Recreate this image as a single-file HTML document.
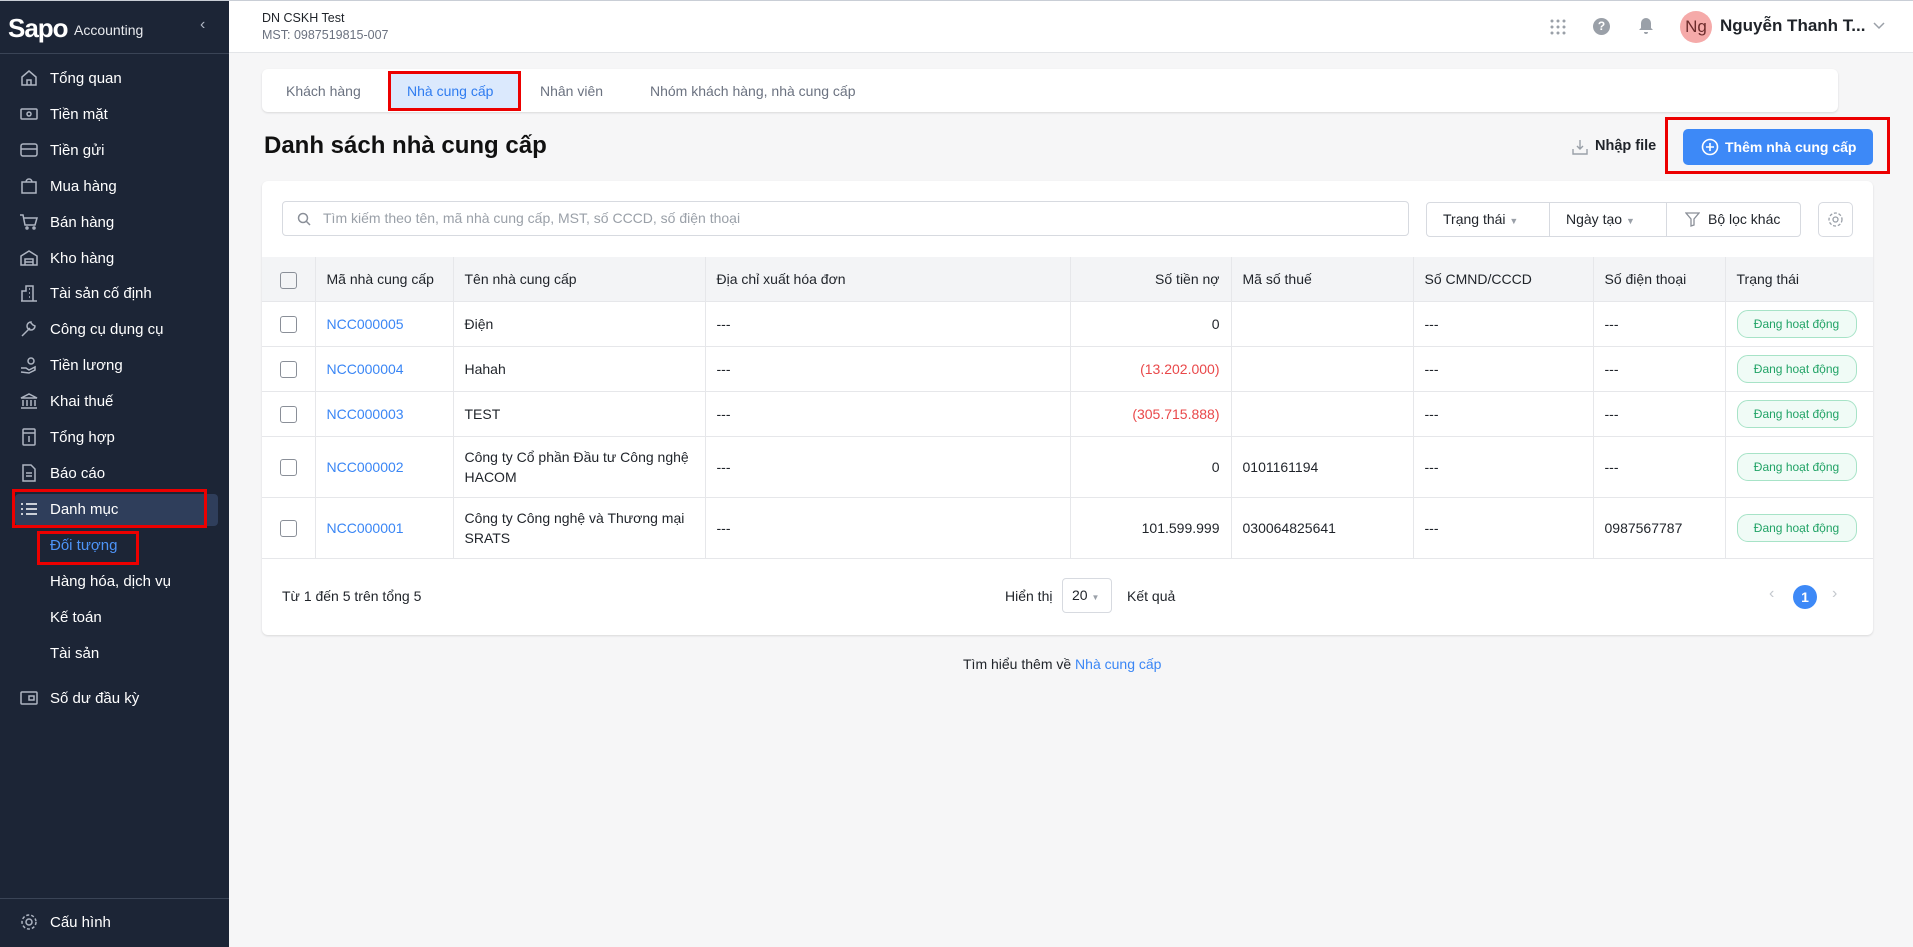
<!DOCTYPE html>
<html><head><meta charset="utf-8"><style>
*{box-sizing:border-box;margin:0;padding:0}
body{width:1913px;height:947px;overflow:hidden;font-family:"Liberation Sans",Arial,sans-serif;background:#f6f6f7;position:relative;color:#1f2329}
.abs{position:absolute}
#sb{left:0;top:0;width:229px;height:947px;background:#1c2536;color:#fff}
.mi{position:absolute;left:0;width:229px;height:36px;display:flex;align-items:center;font-size:15px;color:#fff}
.mi svg{position:absolute;left:19px;width:20px;height:20px;fill:none;stroke:#aeb5c2;stroke-width:1.5}
.mi span{position:absolute;left:50px}
.sub{position:absolute;left:50px;font-size:15px;color:#fff}
#hd{left:229px;top:0;width:1684px;height:53px;background:#fff;border-bottom:1px solid #e3e5e8}
.card{background:#fff;border-radius:6px;box-shadow:0 1px 2px rgba(0,0,0,.12)}
table{border-collapse:collapse;table-layout:fixed;font-size:14px}
td,th{border-right:1px solid #e6e7ea;border-bottom:1px solid #e6e7ea;padding:0 11px;text-align:left;font-weight:normal;vertical-align:middle;line-height:20px}
th{background:#f3f4f6;height:44px;color:#1f2329}
td:last-child,th:last-child{border-right:none}
.cb{width:17px;height:17px;border:1.6px solid #8a8f98;border-radius:3px;display:inline-block;vertical-align:middle}
.lk{color:#3a86f5}
.red{color:#e9484a}
.r{text-align:right}
.bd{display:inline-block;border:1px solid #a7e3c7;background:#f0fbf6;color:#21a366;border-radius:11px;font-size:12px;padding:3px 0;width:120px;text-align:center}
.redbox{position:absolute;border:3px solid #ec0000}
</style></head><body>
<div class="abs" style="left:0;top:0;width:1913px;height:1px;background:#c9ced6;z-index:5"></div>
<div id="sb" class="abs">
 <div class="abs" style="left:0;top:53px;width:229px;height:1px;background:#3a4456"></div>
 <div class="abs" style="left:8px;top:13px;font-size:26px;font-weight:bold;letter-spacing:-1px;color:#fff">Sapo</div>
 <div class="abs" style="left:74px;top:22px;font-size:14px;color:#e8eaee">Accounting</div>
 <div class="abs" style="left:200px;top:16px;font-size:16px;color:#aeb5c2">‹</div>
 <div class="mi" style="top:60px"><svg viewBox="0 0 20 20"><path d="M3 9l7-6 7 6v8H3z M8 17v-5h4v5"/></svg><span>Tổng quan</span></div>
 <div class="mi" style="top:96px"><svg viewBox="0 0 20 20"><rect x="2" y="5" width="16" height="10" rx="1"/><circle cx="10" cy="10" r="2"/></svg><span>Tiền mặt</span></div>
 <div class="mi" style="top:132px"><svg viewBox="0 0 20 20"><rect x="2" y="4" width="16" height="12" rx="2"/><path d="M2 9h16"/></svg><span>Tiền gửi</span></div>
 <div class="mi" style="top:168px"><svg viewBox="0 0 20 20"><path d="M3 6h14v11H3z M7 6a3 3 0 016 0"/></svg><span>Mua hàng</span></div>
 <div class="mi" style="top:204px"><svg viewBox="0 0 20 20"><path d="M1 3h3l2 10h10l2-7H5"/><circle cx="8" cy="16" r="1"/><circle cx="15" cy="16" r="1"/></svg><span>Bán hàng</span></div>
 <div class="mi" style="top:240px"><svg viewBox="0 0 20 20"><path d="M2 8l8-5 8 5v9H2z M6 17v-6h8v6 M6 14h8"/></svg><span>Kho hàng</span></div>
 <div class="mi" style="top:275px"><svg viewBox="0 0 20 20"><path d="M3 18V8h4V3h7v15 M2 18h16 M10 6h1 M10 10h1 M10 14h1"/></svg><span>Tài sản cố định</span></div>
 <div class="mi" style="top:311px"><svg viewBox="0 0 20 20"><path d="M3 17l8-8 M12 3a4 4 0 104 4l-2-1-2-2z"/></svg><span>Công cụ dụng cụ</span></div>
 <div class="mi" style="top:347px"><svg viewBox="0 0 20 20"><circle cx="12" cy="6" r="3"/><path d="M2 13h5l3 2 6-3v3l-6 3-8-1"/></svg><span>Tiền lương</span></div>
 <div class="mi" style="top:383px"><svg viewBox="0 0 20 20"><path d="M2 7l8-4 8 4z M4 9v6 M8 9v6 M12 9v6 M16 9v6 M2 17h16"/></svg><span>Khai thuế</span></div>
 <div class="mi" style="top:419px"><svg viewBox="0 0 20 20"><rect x="4" y="2" width="12" height="16" rx="1"/><path d="M4 6h12 M10 9v6"/></svg><span>Tổng hợp</span></div>
 <div class="mi" style="top:455px"><svg viewBox="0 0 20 20"><path d="M4 2h8l4 4v12H4z M7 10h6 M7 13h6"/></svg><span>Báo cáo</span></div>
 <div class="abs" style="left:15px;top:494px;width:203px;height:32px;background:#2f3e5b;border-radius:4px"></div>
 <div class="mi" style="top:491px"><svg viewBox="0 0 20 20" style="stroke:#fff"><path d="M7 5h11 M7 10h11 M7 15h11 M2 5h2 M2 10h2 M2 15h2"/></svg><span>Danh mục</span></div>
 <div class="redbox" style="left:12px;top:489px;width:195px;height:39px"></div>
 <div class="sub" style="top:537px;color:#4d94f8">Đối tượng</div>
 <div class="redbox" style="left:37px;top:531px;width:102px;height:34px"></div>
 <div class="sub" style="top:573px">Hàng hóa, dịch vụ</div>
 <div class="sub" style="top:609px">Kế toán</div>
 <div class="sub" style="top:645px">Tài sản</div>
 <div class="mi" style="top:680px"><svg viewBox="0 0 20 20"><rect x="2" y="4" width="16" height="12" rx="1"/><rect x="10" y="8" width="5" height="4"/></svg><span>Số dư đầu kỳ</span></div>
 <div class="abs" style="left:0;top:898px;width:229px;height:1px;background:#3a4456"></div>
 <div class="mi" style="top:904px"><svg viewBox="0 0 20 20"><circle cx="10" cy="10" r="3"/><circle cx="10" cy="10" r="7" stroke-dasharray="3 2"/></svg><span>Cấu hình</span></div>
</div>
<div id="hd" class="abs">
 <div class="abs" style="left:33px;top:11px;font-size:12.5px;color:#1f2329">DN CSKH Test</div>
 <div class="abs" style="left:33px;top:28px;font-size:12.5px;color:#6b7280">MST: 0987519815-007</div>
 <svg class="abs" style="left:1321px;top:19px" width="16" height="16" viewBox="0 0 16 16" fill="#9aa0a8"><circle cx="2" cy="2" r="1.5"/><circle cx="8" cy="2" r="1.5"/><circle cx="14" cy="2" r="1.5"/><circle cx="2" cy="8" r="1.5"/><circle cx="8" cy="8" r="1.5"/><circle cx="14" cy="8" r="1.5"/><circle cx="2" cy="14" r="1.5"/><circle cx="8" cy="14" r="1.5"/><circle cx="14" cy="14" r="1.5"/></svg>
 <div class="abs" style="left:1364px;top:18px;width:17px;height:17px;border-radius:50%;background:#9aa0a8;color:#fff;font-size:12px;font-weight:bold;text-align:center;line-height:17px">?</div>
 <svg class="abs" style="left:1409px;top:17px" width="16" height="18" viewBox="0 0 16 18" fill="#9aa0a8"><path d="M8 1a5 5 0 00-5 5v5l-2 2h14l-2-2V6a5 5 0 00-5-5z M6 15h4a2 2 0 01-4 0z"/></svg>
 <div class="abs" style="left:1451px;top:11px;width:32px;height:32px;border-radius:50%;background:#f5aaa9;color:#6b2b2b;font-size:17px;text-align:center;line-height:32px">Ng</div>
 <div class="abs" style="left:1491px;top:16px;font-size:17px;font-weight:bold;color:#1f2329">Nguyễn Thanh T...</div>
 <svg class="abs" style="left:1644px;top:22px" width="12" height="8" viewBox="0 0 12 8" fill="none" stroke="#9aa0a8" stroke-width="1.5"><path d="M1 1l5 5 5-5"/></svg>
</div>
<div class="abs card" style="left:262px;top:69px;width:1576px;height:43px"></div>
<div class="abs" style="left:390px;top:73px;width:128px;height:37px;background:#dbe9fd"></div>
<div class="abs" style="left:286px;top:83px;font-size:14px;color:#6b7280">Khách hàng</div>
<div class="abs" style="left:407px;top:83px;font-size:14px;color:#2f7cf0">Nhà cung cấp</div>
<div class="abs" style="left:540px;top:83px;font-size:14px;color:#6b7280">Nhân viên</div>
<div class="abs" style="left:650px;top:83px;font-size:14px;color:#6b7280">Nhóm khách hàng, nhà cung cấp</div>
<div class="redbox" style="left:388px;top:71px;width:133px;height:40px"></div>
<div class="abs" style="left:264px;top:132px;font-size:24px;font-weight:bold;color:#111">Danh sách nhà cung cấp</div>
<svg class="abs" style="left:1572px;top:139px" width="16" height="16" viewBox="0 0 16 16" fill="none" stroke="#9aa0a8" stroke-width="1.4"><path d="M1 10v5h14v-5 M8 1v9 M5 7l3 3 3-3"/></svg>
<div class="abs" style="left:1595px;top:138px;font-size:14.5px;font-weight:bold">Nhập file</div>
<div class="abs" style="left:1683px;top:129px;width:190px;height:36px;background:#3d89f7;border-radius:5px;color:#fff;font-size:14px;font-weight:bold;line-height:36px;padding-left:42px">Thêm nhà cung cấp</div>
<svg class="abs" style="left:1701px;top:138px" width="18" height="18" viewBox="0 0 18 18" fill="none" stroke="#fff" stroke-width="1.6"><circle cx="9" cy="9" r="7.5"/><path d="M9 5v8 M5 9h8"/></svg>
<div class="redbox" style="left:1665px;top:117px;width:225px;height:57px"></div>
<div class="abs card" style="left:262px;top:181px;width:1611px;height:454px;overflow:hidden">
 <div class="abs" style="left:20px;top:20px;width:1127px;height:35px;border:1px solid #d7dae0;border-radius:4px"></div>
 <svg class="abs" style="left:35px;top:31px" width="14" height="14" viewBox="0 0 14 14" fill="none" stroke="#8a8f98" stroke-width="1.5"><circle cx="6" cy="6" r="4.5"/><path d="M9.5 9.5L13 13"/></svg>
 <div class="abs" style="left:61px;top:29px;font-size:14px;color:#9aa0a8">Tìm kiếm theo tên, mã nhà cung cấp, MST, số CCCD, số điện thoại</div>
 <div class="abs" style="left:1164px;top:21px;width:375px;height:35px;border:1px solid #d7dae0;border-radius:4px"></div>
 <div class="abs" style="left:1287px;top:21px;width:1px;height:35px;background:#d7dae0"></div>
 <div class="abs" style="left:1404px;top:21px;width:1px;height:35px;background:#d7dae0"></div>
 <div class="abs" style="left:1181px;top:30px;font-size:14px">Trạng thái <span style="color:#9aa0a8;font-size:9px">▼</span></div>
 <div class="abs" style="left:1304px;top:30px;font-size:14px">Ngày tạo <span style="color:#9aa0a8;font-size:9px">▼</span></div>
 <svg class="abs" style="left:1423px;top:31px" width="15" height="15" viewBox="0 0 15 15" fill="none" stroke="#8a8f98" stroke-width="1.3"><path d="M1 1h13L9 7v6l-3 1V7z"/></svg>
 <div class="abs" style="left:1446px;top:30px;font-size:14px">Bộ lọc khác</div>
 <div class="abs" style="left:1556px;top:21px;width:35px;height:35px;border:1px solid #d7dae0;border-radius:5px"></div>
 <svg class="abs" style="left:1565px;top:30px" width="17" height="17" viewBox="0 0 17 17" fill="none" stroke="#9aa0a8" stroke-width="1.3"><circle cx="8.5" cy="8.5" r="2.5"/><circle cx="8.5" cy="8.5" r="6.5" stroke-dasharray="3 1.8"/></svg>
 <table class="abs" style="left:0;top:76px;width:1611px">
  <colgroup><col style="width:53px"><col style="width:138px"><col style="width:252px"><col style="width:365px"><col style="width:161px"><col style="width:182px"><col style="width:180px"><col style="width:132px"><col style="width:148px"></colgroup>
  <tr><th style="padding-left:18px"><span class="cb"></span></th><th>Mã nhà cung cấp</th><th>Tên nhà cung cấp</th><th>Địa chỉ xuất hóa đơn</th><th class="r">Số tiền nợ</th><th>Mã số thuế</th><th>Số CMND/CCCD</th><th>Số điện thoại</th><th>Trạng thái</th></tr>
  <tr style="height:45px"><td style="padding-left:18px"><span class="cb"></span></td><td class="lk">NCC000005</td><td>Điện</td><td>---</td><td class="r">0</td><td></td><td>---</td><td>---</td><td><span class="bd">Đang hoạt động</span></td></tr>
  <tr style="height:45px"><td style="padding-left:18px"><span class="cb"></span></td><td class="lk">NCC000004</td><td>Hahah</td><td>---</td><td class="r red">(13.202.000)</td><td></td><td>---</td><td>---</td><td><span class="bd">Đang hoạt động</span></td></tr>
  <tr style="height:45px"><td style="padding-left:18px"><span class="cb"></span></td><td class="lk">NCC000003</td><td>TEST</td><td>---</td><td class="r red">(305.715.888)</td><td></td><td>---</td><td>---</td><td><span class="bd">Đang hoạt động</span></td></tr>
  <tr style="height:61px"><td style="padding-left:18px"><span class="cb"></span></td><td class="lk">NCC000002</td><td>Công ty Cổ phần Đầu tư Công nghệ HACOM</td><td>---</td><td class="r">0</td><td>0101161194</td><td>---</td><td>---</td><td><span class="bd">Đang hoạt động</span></td></tr>
  <tr style="height:61px"><td style="padding-left:18px"><span class="cb"></span></td><td class="lk">NCC000001</td><td>Công ty Công nghệ và Thương mại SRATS</td><td>---</td><td class="r">101.599.999</td><td>030064825641</td><td>---</td><td>0987567787</td><td><span class="bd">Đang hoạt động</span></td></tr>
 </table>
 <div class="abs" style="left:20px;top:407px;font-size:14px">Từ 1 đến 5 trên tổng 5</div>
 <div class="abs" style="left:743px;top:407px;font-size:14px">Hiển thị</div>
 <div class="abs" style="left:800px;top:397px;width:50px;height:35px;border:1px solid #d7dae0;border-radius:4px;font-size:14px;line-height:33px;padding-left:9px">20 <span style="color:#9aa0a8;font-size:8px">▼</span></div>
 <div class="abs" style="left:865px;top:407px;font-size:14px">Kết quả</div>
 <div class="abs" style="left:1507px;top:404px;color:#c4c8ce;font-size:16px">‹</div>
 <div class="abs" style="left:1531px;top:404px;width:24px;height:24px;border-radius:50%;background:#3d89f7;color:#fff;font-size:14px;font-weight:bold;text-align:center;line-height:24px">1</div>
 <div class="abs" style="left:1570px;top:404px;color:#c4c8ce;font-size:16px">›</div>
</div>
<div class="abs" style="left:963px;top:656px;font-size:14px">Tìm hiểu thêm về <span class="lk">Nhà cung cấp</span></div>
</body></html>
